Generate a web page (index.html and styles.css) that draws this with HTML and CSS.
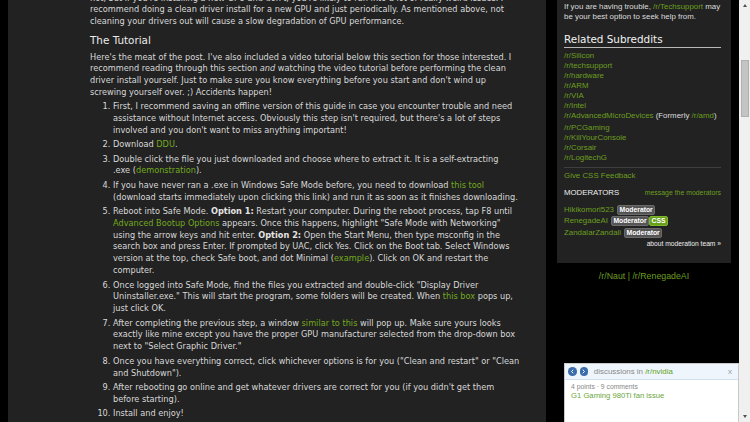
FILE: index.html
```html
<!DOCTYPE html>
<html lang="en">
<head>
  <meta charset="UTF-8">
  <meta name="viewport" content="width=device-width, initial-scale=1.0">
  <title>Clean driver install</title>
  <link rel="stylesheet" href="styles.css">
</head>
<body>
  <div class="page">
    <div class="post">
      <div class="md">
        <p>not, but if you're installing a new GPU and don't, you're likely to run into a lot of really weird issues. I recommend doing a clean driver install for a new GPU and just periodically. As mentioned above, not cleaning your drivers out will cause a slow degradation of GPU performance.</p>
        <h2>The Tutorial</h2>
        <p>Here's the meat of the post. I've also included a video tutorial below this section for those interested. I recommend reading through this section <em>and</em> watching the video tutorial before performing the clean driver install yourself. Just to make sure you know everything before you start and don't wind up screwing yourself over. ;) Accidents happen!</p>
        <ol>
          <li>First, I recommend saving an offline version of this guide in case you encounter trouble and need assistance without Internet access. Obviously this step isn't required, but there's a lot of steps involved and you don't want to miss anything important!</li>
          <li>Download <a href="#">DDU</a>.</li>
          <li>Double click the file you just downloaded and choose where to extract it. It is a self-extracting .exe&nbsp;(<a href="#">demonstration</a>).</li>
          <li>If you have never ran a .exe in Windows Safe Mode before, you need to download <a href="#">this tool</a> (download starts immediately upon clicking this link) and run it as soon as it finishes downloading.</li>
          <li>Reboot into Safe Mode. <strong>Option 1:</strong> Restart your computer. During the reboot process, tap F8 until <a href="#">Advanced Bootup Options</a> appears. Once this happens, highlight "Safe Mode with Networking" using the arrow keys and hit enter. <strong>Option 2:</strong> Open the Start Menu, then type msconfig in the search box and press Enter. If prompted by UAC, click Yes. Click on the Boot tab. Select Windows version at the top, check Safe boot, and dot Minimal (<a href="#">example</a>). Click on OK and restart the computer.</li>
          <li>Once logged into Safe Mode, find the files you extracted and double-click "Display Driver Uninstaller.exe." This will start the program, some folders will be created. When <a href="#">this box</a> pops up, just click OK.</li>
          <li>After completing the previous step, a window <a href="#">similar to this</a> will pop up. Make sure yours looks exactly like mine except you have the proper GPU manufacturer selected from the drop-down box next to "Select Graphic Driver."</li>
          <li>Once you have everything correct, click whichever options is for you ("Clean and restart" or "Clean and Shutdown").</li>
          <li>After rebooting go online and get whatever drivers are correct for you (if you didn't get them before starting).</li>
          <li>Install and enjoy!</li>
        </ol>
      </div>
    </div>

    <div class="side">
      <div class="side-box">
        <p class="help">If you are having trouble, <a href="#">/r/Techsupport</a> may be your best option to seek help from.</p>
        <h3 class="side-title">Related Subreddits</h3>
        <ul class="subs">
          <li><a href="#">/r/Silicon</a></li>
          <li><a href="#">/r/techsupport</a></li>
          <li><a href="#">/r/hardware</a></li>
          <li><a href="#">/r/ARM</a></li>
          <li><a href="#">/r/VIA</a></li>
          <li><a href="#">/r/Intel</a></li>
          <li><a href="#">/r/AdvancedMicroDevices</a> (Formerly <a href="#">/r/amd</a>)</li>
        </ul>
        <ul class="subs">
          <li><a href="#">/r/PCGaming</a></li>
          <li><a href="#">/r/KillYourConsole</a></li>
          <li><a href="#">/r/Corsair</a></li>
          <li><a href="#">/r/LogitechG</a></li>
        </ul>
        <div class="feedback"><a href="#">Give CSS Feedback</a></div>
        <div class="mods">
          <div class="mods-head">
            <span>MODERATORS</span>
            <a href="#">message the moderators</a>
          </div>
          <ul class="mod-list">
            <li><a href="#">Hikikomori523</a><span class="flairs"><span class="flair">Moderator</span></span></li>
            <li><a href="#">RenegadeAI</a><span class="flairs"><span class="flair">Moderator</span><span class="flair flair-css">CSS</span></span></li>
            <li><a href="#">ZandalarZandali</a><span class="flairs"><span class="flair">Moderator</span></span></li>
          </ul>
          <div class="mods-more">about moderation team &raquo;</div>
        </div>
      </div>
      <div class="side-foot"><a href="#">/r/Naut</a> | <a href="#">/r/RenegadeAI</a></div>
    </div>
  </div>

  <div class="scrollbar">
    <div class="sb-arrow sb-up"></div>
    <div class="sb-thumb"></div>
    <div class="sb-arrow sb-down"></div>
  </div>

  <div class="discuss">
    <div class="discuss-head">
      <span class="nav-btn">
        <svg width="5" height="5" viewBox="0 0 10 10"><path d="M6.5 1.5 L3 5 L6.5 8.5" fill="none" stroke="#fff" stroke-width="2"/></svg>
      </span>
      <span class="nav-btn">
        <svg width="5" height="5" viewBox="0 0 10 10"><path d="M3.5 1.5 L7 5 L3.5 8.5" fill="none" stroke="#fff" stroke-width="2"/></svg>
      </span>
      <span class="discuss-title">discussions in <a href="#">/r/nvidia</a></span>
      <span class="close">x</span>
    </div>
    <div class="discuss-body">
      <div class="meta">4 points &middot; 9 comments</div>
      <a class="thread" href="#">G1 Gaming 980Ti fan issue</a>
    </div>
  </div>
</body>
</html>
```

FILE: styles.css
```css
* {
  margin: 0;
  padding: 0;
  box-sizing: border-box;
}
body {
  display: flex;
  width: 750px;
  height: 422px;
  overflow: hidden;
  background: #000;
  font-family: "Liberation Sans", Arial, sans-serif;
}
a {
  color: #6b9f20;
  text-decoration: none;
}

/* main column */
.page {
  display: flex;
  flex: 1;
  gap: 11px;
  padding-left: 8px;
}
.post {
  width: 538px;
  padding: 0 24px 0 82px;
  background: #222;
  color: #d8d8d8;
  font-family: "DejaVu Sans", Verdana, sans-serif;
  font-size: 8.2px;
  line-height: 11.8px;
  overflow: hidden;
}
.md {
  margin-top: -7.5px;
}
.md h2 {
  margin: 6.1px 0 4.6px;
  font-size: 10.4px;
  font-weight: normal;
  line-height: 13px;
  color: #ebebeb;
}
.md ol {
  margin-top: 2.2px;
  padding-left: 23px;
}
.md li {
  margin-bottom: 2.7px;
}
.md a {
  color: #72a91f;
}
.md strong {
  color: #e4e4e4;
}

/* sidebar */
.side {
  display: flex;
  flex-direction: column;
  width: 174px;
}
.side-box {
  padding: 2.3px 10px 15px 7px;
  background: #222;
  color: #dcdcdc;
  font-size: 7.9px;
  line-height: 10px;
}
.side-title {
  margin: 11px 0 3px;
  padding-bottom: 1.5px;
  border-bottom: 1px solid #b8b8b8;
  font-family: "DejaVu Sans", Verdana, sans-serif;
  font-size: 10.4px;
  font-weight: normal;
  line-height: 12px;
  color: #f2f2f2;
}
.subs {
  list-style: none;
}
.subs + .subs {
  margin-top: 2.3px;
}
.feedback {
  margin-top: 3.7px;
  padding-top: 3.7px;
  border-top: 1px solid #3e3e3e;
}
.mods {
  margin-top: 7px;
}
.mods-head {
  display: flex;
  justify-content: space-between;
  align-items: baseline;
}
.mods-head span {
  font-size: 7.8px;
  color: #f0f0f0;
}
.mods-head a {
  font-size: 6.9px;
}
.mod-list {
  margin-top: 5.3px;
  list-style: none;
}
.mod-list li {
  display: flex;
  align-items: center;
  gap: 3px;
  height: 11.5px;
}
.flairs {
  display: flex;
}
.flair {
  padding: 0 1.5px;
  border: 1px solid #6b6b6b;
  border-radius: 2px;
  background: #555;
  color: #fff;
  font-size: 6.8px;
  font-weight: bold;
  line-height: 8px;
}
.flair-css {
  border-color: #7db52c;
  background: #69a01c;
}
.mods-more {
  margin-top: 0.4px;
  text-align: right;
  color: #eee;
  font-size: 6.7px;
  line-height: 9px;
}
.side-foot {
  margin-top: 7.3px;
  text-align: center;
  color: #6b9f20;
  font-size: 8.8px;
  line-height: 12px;
}

/* fake window scrollbar */
.scrollbar {
  display: flex;
  flex-direction: column;
  align-items: center;
  width: 11px;
  background: #f0f0f0;
}
.sb-arrow {
  width: 0;
  height: 0;
  border-left: 2.5px solid transparent;
  border-right: 2.5px solid transparent;
}
.sb-up {
  margin-top: 4px;
  border-bottom: 3px solid #505050;
}
.sb-thumb {
  width: 8px;
  height: 57px;
  margin-top: 53px;
  border: 1px solid #b0b0b0;
  background: #c4c4c4;
}
.sb-down {
  margin: auto 0 4px;
  border-top: 3px solid #505050;
}

/* floating discussion widget */
.discuss {
  position: fixed;
  left: 564px;
  bottom: 0;
  width: 175px;
  height: 59px;
  border: 1px solid #c9c9c9;
  border-bottom: 0;
  background: #fff;
}
.discuss-head {
  display: flex;
  align-items: center;
  gap: 2.9px;
  height: 16px;
  padding: 0 6px 0 3px;
  border-bottom: 1px solid #cfe0f0;
  background: #eef5fc;
  color: #888;
  font-size: 7.9px;
}
.nav-btn {
  display: flex;
  justify-content: center;
  align-items: center;
  width: 8.7px;
  height: 8.7px;
  border-radius: 50%;
  background: #3b6cad;
}
.discuss-title {
  margin-left: 2.7px;
}
.discuss-title a {
  color: #5fa21c;
}
.close {
  margin-left: auto;
  color: #9a9a9a;
  font-size: 8px;
}
.discuss-body {
  padding: 2.7px 0 0 6px;
}
.meta {
  color: #888;
  font-size: 6.8px;
  line-height: 8px;
}
.thread {
  display: block;
  color: #6aa63a;
  font-size: 7.7px;
  line-height: 9px;
}
```
